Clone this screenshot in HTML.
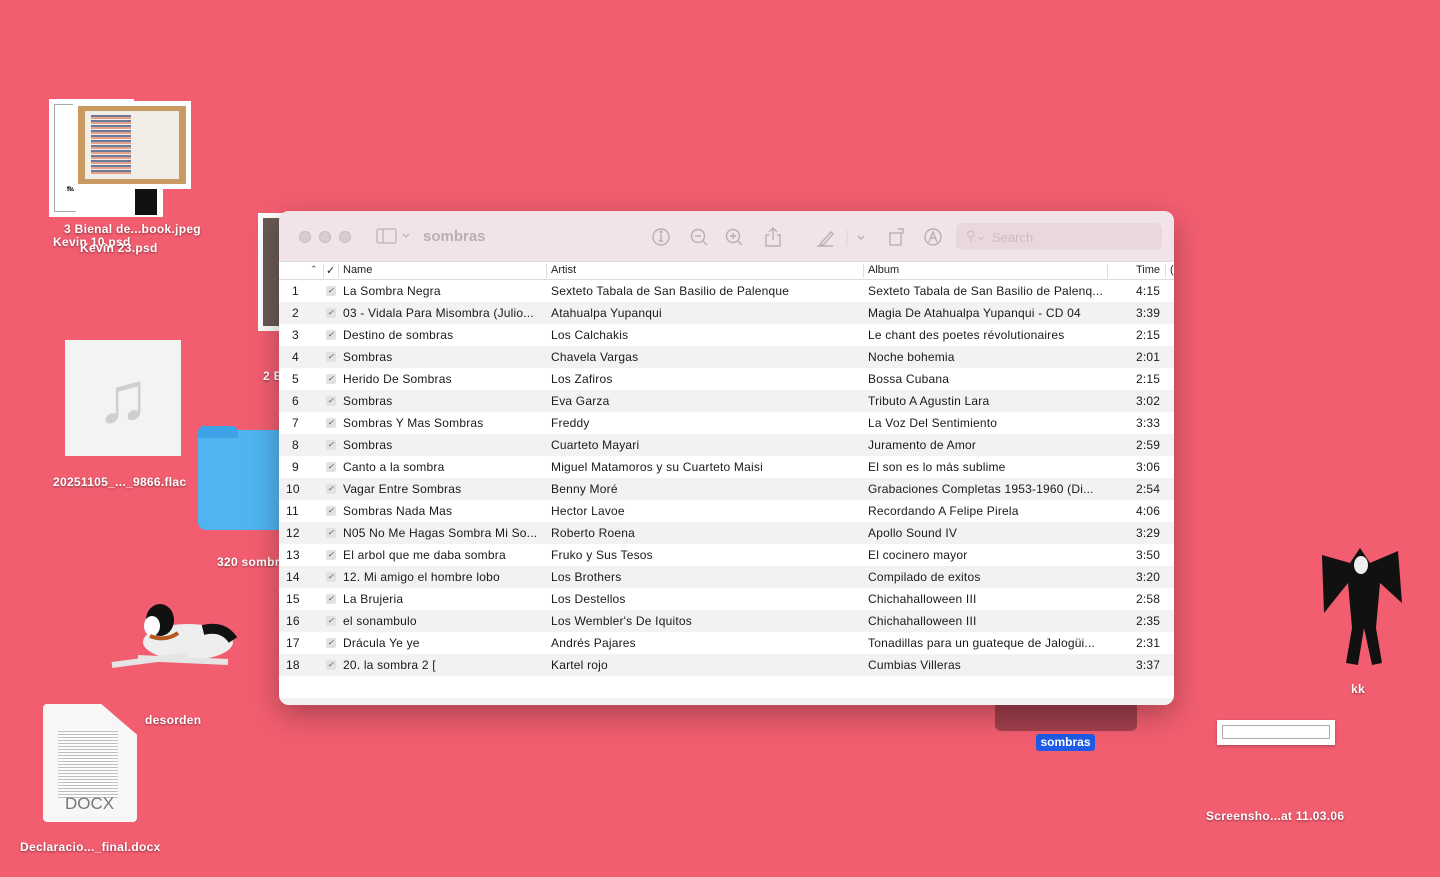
<!DOCTYPE html>
<html><head><meta charset="utf-8"><style>
*{margin:0;padding:0;box-sizing:border-box}
body{width:1440px;height:877px;background:#f25e70;position:relative;overflow:hidden;font-family:"Liberation Sans",Arial,sans-serif}
.lbl{position:absolute;color:#fff;font-weight:bold;font-size:12px;letter-spacing:.3px;text-shadow:0 1px 2px rgba(0,0,0,.45);white-space:nowrap}
.abs{position:absolute}
.win{position:absolute;left:279px;top:211px;width:895px;height:494px;border-radius:10px;overflow:hidden;background:#fff;box-shadow:0 10px 30px rgba(0,0,0,.3)}
.tb{position:absolute;left:0;top:0;width:895px;height:51px;background:#f1e3e7;border-bottom:1px solid #ddd}
.dot{position:absolute;top:20px;width:12px;height:12px;border-radius:50%;background:#d9cdd1;border:1px solid #c9bcc0}
.hdr{position:absolute;top:51px;left:0;width:895px;height:18px;border-bottom:1px solid #ddd;font-size:11px;color:#222}
.hdr span{position:absolute;top:2px}
.vd{position:absolute;top:2px;width:1px;height:14px;background:#ddd}
.row{position:absolute;left:0;width:895px;height:22px;font-size:12px;color:#1a1a1a;letter-spacing:.2px}
.row span{position:absolute;top:4px;white-space:nowrap}
.row:nth-child(even){background:#f2f2f2}
.cb{position:absolute;left:47px;top:6px;width:10px;height:10px;border-radius:2px;background:#e2e2e2;font-size:8px;line-height:10px;text-align:center;color:#555}
.ic{position:absolute;top:15px}
</style></head><body>

<div class="abs" style="left:49px;top:99px;width:85px;height:118px;background:#fff;"><div class="abs" style="left:5px;top:5px;width:75px;height:108px;border:1px solid #aaa"></div><div class="abs" style="left:18px;top:88px;font-size:6px;font-weight:bold">𝔑𝔞 𝔖𝔬𝔩𝔢𝔡𝔞𝔡</div></div>
<div class="abs" style="left:76px;top:185px;width:87px;height:32px;background:#fff"><div class="abs" style="left:59px;top:0;width:22px;height:30px;background:#111"></div></div>
<div class="abs" style="left:73px;top:101px;width:118px;height:88px;background:#fff"><div class="abs" style="left:5px;top:5px;width:108px;height:78px;background:#c99a62"><div class="abs" style="left:7px;top:5px;width:94px;height:68px;background:#f1eee8"><div class="abs" style="left:6px;top:4px;width:40px;height:60px;background:repeating-linear-gradient(#6b7a99 0 2px,#e8a08a 2px 4px,#f1eee8 4px 5px)"></div></div></div></div>
<div class="lbl" style="left:64px;top:222px">3 Bienal de...book.jpeg</div>
<div class="lbl" style="left:53px;top:235px">Kevin 10.psd</div>
<div class="lbl" style="left:80px;top:241px">Kevin 23.psd</div>

<div class="abs" style="left:258px;top:213px;width:25px;height:118px;background:#fff"><div class="abs" style="left:5px;top:5px;width:20px;height:108px;background:#6a5a55"></div></div>
<div class="lbl" style="left:263px;top:369px">2 E</div>

<div class="abs" style="left:65px;top:340px;width:116px;height:116px;background:#f3f3f3;color:#cfcfcf;font-size:72px;text-align:center;line-height:116px">♫</div>
<div class="lbl" style="left:53px;top:475px">20251105_..._9866.flac</div>

<div class="abs" style="left:198px;top:430px;width:90px;height:100px;background:#4fb4f0;border-radius:8px"><div class="abs" style="left:0;top:-4px;width:40px;height:12px;background:#3da3e6;border-radius:6px 6px 0 0"></div></div>
<div class="lbl" style="left:217px;top:555px">320 sombr</div>

<svg class="abs" style="left:108px;top:600px" width="132" height="72"><ellipse cx="80" cy="42" rx="45" ry="18" fill="#eee"/><path d="M95 30 q20 -5 30 10" stroke="#111" stroke-width="10" fill="none"/><ellipse cx="52" cy="20" rx="14" ry="16" fill="#111"/><ellipse cx="44" cy="26" rx="8" ry="10" fill="#fff"/><path d="M4 65 L80 55 M30 58 L120 62" stroke="#e5e5e5" stroke-width="6"/><path d="M42 36 q15 6 28 -3" stroke="#b55a1e" stroke-width="4" fill="none"/></svg>
<div class="lbl" style="left:145px;top:713px">desorden</div>

<div class="abs" style="left:43px;top:704px;width:94px;height:118px;background:#f7f7f7;border-radius:4px;box-shadow:0 1px 3px rgba(0,0,0,.3);clip-path:polygon(0 0,62% 0,100% 26%,100% 100%,0 100%)"><div class="abs" style="left:15px;top:25px;width:60px;height:70px;background:repeating-linear-gradient(#fff 0 2px,#999 2px 3px);opacity:.6"></div><div class="abs" style="left:22px;top:90px;font-size:17px;color:#777">DOCX</div></div>
<div class="lbl" style="left:20px;top:840px">Declaracio..._final.docx</div>

<div class="abs" style="left:995px;top:700px;width:142px;height:31px;background:#a2404d;border-radius:0 0 6px 6px"></div>
<div class="abs" style="left:1036px;top:734px;width:59px;height:17px;background:#1f5be6;border-radius:3px;color:#fff;font-weight:bold;font-size:12px;text-align:center;line-height:17px">sombras</div>
<svg class="abs" style="left:1318px;top:543px" width="86" height="128"><path d="M42 5 L52 20 L80 8 L84 60 L62 40 L58 85 L64 120 L54 122 L46 85 L40 122 L28 120 L34 85 L30 40 L6 70 L4 12 L32 20 Z" fill="#111"/><ellipse cx="43" cy="22" rx="7" ry="9" fill="#eee"/></svg>
<div class="lbl" style="left:1351px;top:682px">kk</div>
<div class="abs" style="left:1217px;top:720px;width:118px;height:25px;background:#fff;box-shadow:0 1px 3px rgba(0,0,0,.3)"><div class="abs" style="left:5px;top:5px;width:108px;height:14px;border:1px solid #aaa"></div></div>
<div class="lbl" style="left:1206px;top:809px">Screensho...at 11.03.06</div>

<div class="win">
<div class="tb">
<div class="dot" style="left:20px"></div><div class="dot" style="left:40px"></div><div class="dot" style="left:60px"></div>
<svg class="ic" style="left:97px;top:17px" width="36" height="16"><rect x="1" y="1" width="19" height="14" rx="2" fill="none" stroke="#bfb3b7" stroke-width="1.3"/><line x1="7" y1="1" x2="7" y2="15" stroke="#bfb3b7" stroke-width="1.3"/><path d="M27 6 l3 3 l3 -3" stroke="#bfb3b7" fill="none" stroke-width="1.3"/></svg>
<div class="abs" style="left:144px;top:17px;font-size:15px;font-weight:bold;color:#bcaeb3">sombras</div>
<svg class="ic" style="left:372px;top:16px" width="320" height="22" fill="none" stroke="#bcaeb3" stroke-width="1.4">
<circle cx="10" cy="10" r="8"/><path d="M10 8v6M8 14h4M9 8h1"/><circle cx="10" cy="5" r=".8" fill="#bcaeb3"/>
<circle cx="47" cy="9" r="6.5"/><path d="M52 14l4 4M44 9h6"/>
<circle cx="82" cy="9" r="6.5"/><path d="M87 14l4 4M79 9h6M82 6v6"/>
<path d="M118 8h-3v11h14V8h-3M122 2v11M118 5l4-4 4 4"/>
<path d="M170 16l10-11 2 2-10 11h-3zM166 19h16" />
<path d="M196 3v16" stroke="#ddd"/>
<path d="M207 9l3 3 3-3"/>
<rect x="239" y="6" width="11" height="12"/><path d="M247 2h5v5"/>
<circle cx="282" cy="10" r="8"/><path d="M278 15l4-10 4 10M280 11h4"/>
</svg>
<div class="abs" style="left:677px;top:12px;width:206px;height:27px;background:#e8d8dc;border-radius:6px"><span class="abs" style="left:10px;top:5px;color:#cbbcc0;font-size:13px">⚲⌄</span><span class="abs" style="left:36px;top:7px;color:#cbbcc0;font-size:13px">Search</span></div>
</div>
<div class="hdr">
<span style="left:31px;font-size:9px;color:#555">⌃</span><div class="vd" style="left:44px"></div><span style="left:47px">✓</span><div class="vd" style="left:59px"></div>
<span style="left:64px">Name</span><div class="vd" style="left:267px"></div>
<span style="left:272px">Artist</span><div class="vd" style="left:584px"></div>
<span style="left:589px">Album</span><div class="vd" style="left:828px"></div>
<span style="left:857px">Time</span><div class="vd" style="left:886px"></div><span style="left:891px">(</span>
</div>
<div class="abs" style="left:0;top:69px;width:895px">
<div class="row" style="top:0"><span style="left:13px">1</span><i class="cb">✓</i><span style="left:64px">La Sombra Negra</span><span style="left:272px">Sexteto Tabala de San Basilio de Palenque</span><span style="left:589px">Sexteto Tabala de San Basilio de Palenq...</span><span style="left:857px">4:15</span></div>
<div class="row" style="top:22px"><span style="left:13px">2</span><i class="cb">✓</i><span style="left:64px">03 - Vidala Para Misombra (Julio...</span><span style="left:272px">Atahualpa Yupanqui</span><span style="left:589px">Magia De Atahualpa Yupanqui - CD 04</span><span style="left:857px">3:39</span></div>
<div class="row" style="top:44px"><span style="left:13px">3</span><i class="cb">✓</i><span style="left:64px">Destino de sombras</span><span style="left:272px">Los Calchakis</span><span style="left:589px">Le chant des poetes révolutionaires</span><span style="left:857px">2:15</span></div>
<div class="row" style="top:66px"><span style="left:13px">4</span><i class="cb">✓</i><span style="left:64px">Sombras</span><span style="left:272px">Chavela Vargas</span><span style="left:589px">Noche bohemia</span><span style="left:857px">2:01</span></div>
<div class="row" style="top:88px"><span style="left:13px">5</span><i class="cb">✓</i><span style="left:64px">Herido De Sombras</span><span style="left:272px">Los Zafiros</span><span style="left:589px">Bossa Cubana</span><span style="left:857px">2:15</span></div>
<div class="row" style="top:110px"><span style="left:13px">6</span><i class="cb">✓</i><span style="left:64px">Sombras</span><span style="left:272px">Eva Garza</span><span style="left:589px">Tributo A Agustin Lara</span><span style="left:857px">3:02</span></div>
<div class="row" style="top:132px"><span style="left:13px">7</span><i class="cb">✓</i><span style="left:64px">Sombras Y Mas Sombras</span><span style="left:272px">Freddy</span><span style="left:589px">La Voz Del Sentimiento</span><span style="left:857px">3:33</span></div>
<div class="row" style="top:154px"><span style="left:13px">8</span><i class="cb">✓</i><span style="left:64px">Sombras</span><span style="left:272px">Cuarteto Mayari</span><span style="left:589px">Juramento de Amor</span><span style="left:857px">2:59</span></div>
<div class="row" style="top:176px"><span style="left:13px">9</span><i class="cb">✓</i><span style="left:64px">Canto a la sombra</span><span style="left:272px">Miguel Matamoros y su Cuarteto Maisi</span><span style="left:589px">El son es lo más sublime</span><span style="left:857px">3:06</span></div>
<div class="row" style="top:198px"><span style="left:7px">10</span><i class="cb">✓</i><span style="left:64px">Vagar Entre Sombras</span><span style="left:272px">Benny Moré</span><span style="left:589px">Grabaciones Completas 1953-1960 (Di...</span><span style="left:857px">2:54</span></div>
<div class="row" style="top:220px"><span style="left:7px">11</span><i class="cb">✓</i><span style="left:64px">Sombras Nada Mas</span><span style="left:272px">Hector Lavoe</span><span style="left:589px">Recordando A Felipe Pirela</span><span style="left:857px">4:06</span></div>
<div class="row" style="top:242px"><span style="left:7px">12</span><i class="cb">✓</i><span style="left:64px">N05 No Me Hagas Sombra Mi So...</span><span style="left:272px">Roberto Roena</span><span style="left:589px">Apollo Sound IV</span><span style="left:857px">3:29</span></div>
<div class="row" style="top:264px"><span style="left:7px">13</span><i class="cb">✓</i><span style="left:64px">El arbol que me daba sombra</span><span style="left:272px">Fruko y Sus Tesos</span><span style="left:589px">El cocinero mayor</span><span style="left:857px">3:50</span></div>
<div class="row" style="top:286px"><span style="left:7px">14</span><i class="cb">✓</i><span style="left:64px">12. Mi amigo el hombre lobo</span><span style="left:272px">Los Brothers</span><span style="left:589px">Compilado de exitos</span><span style="left:857px">3:20</span></div>
<div class="row" style="top:308px"><span style="left:7px">15</span><i class="cb">✓</i><span style="left:64px">La Brujeria</span><span style="left:272px">Los Destellos</span><span style="left:589px">Chichahalloween III</span><span style="left:857px">2:58</span></div>
<div class="row" style="top:330px"><span style="left:7px">16</span><i class="cb">✓</i><span style="left:64px">el sonambulo</span><span style="left:272px">Los Wembler's De Iquitos</span><span style="left:589px">Chichahalloween III</span><span style="left:857px">2:35</span></div>
<div class="row" style="top:352px"><span style="left:7px">17</span><i class="cb">✓</i><span style="left:64px">Drácula Ye ye</span><span style="left:272px">Andrés Pajares</span><span style="left:589px">Tonadillas para un guateque de Jalogüi...</span><span style="left:857px">2:31</span></div>
<div class="row" style="top:374px"><span style="left:7px">18</span><i class="cb">✓</i><span style="left:64px">20. la sombra 2 [</span><span style="left:272px">Kartel rojo</span><span style="left:589px">Cumbias Villeras</span><span style="left:857px">3:37</span></div>
<div class="row" style="top:396px"></div>
<div class="row" style="top:418px"></div>
</div>
</div>
</body></html>
